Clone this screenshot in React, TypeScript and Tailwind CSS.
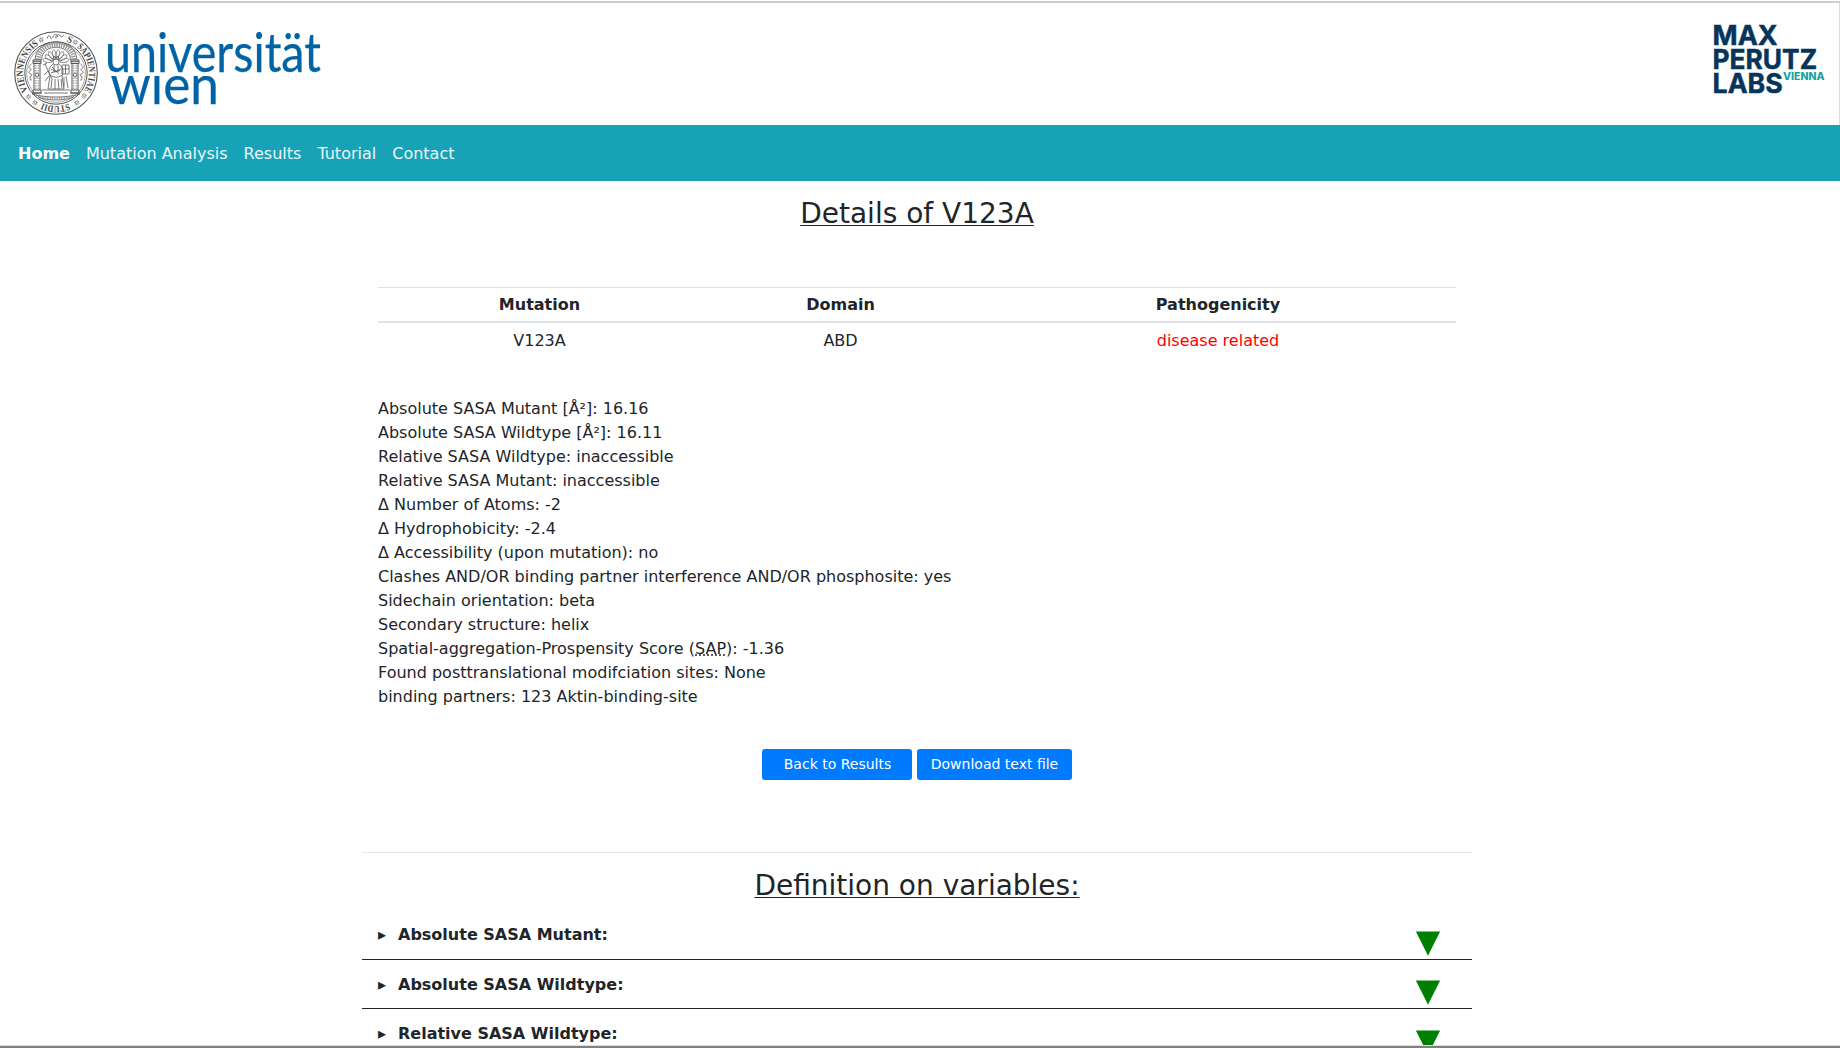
import React from "react";

const links = ["Mutation Analysis", "Results", "Tutorial", "Contact"];

const details: React.ReactNode[] = [
  "Absolute SASA Mutant [Å²]: 16.16",
  "Absolute SASA Wildtype [Å²]: 16.11",
  "Relative SASA Wildtype: inaccessible",
  "Relative SASA Mutant: inaccessible",
  "Δ Number of Atoms: -2",
  "Δ Hydrophobicity: -2.4",
  "Δ Accessibility (upon mutation): no",
  "Clashes AND/OR binding partner interference AND/OR phosphosite: yes",
  "Sidechain orientation: beta",
  "Secondary structure: helix",
  <>
    Spatial-aggregation-Prospensity Score (<abbr className="underline decoration-dotted">SAP</abbr>): -1.36
  </>,
  "Found posttranslational modifciation sites: None",
  "binding partners: 123 Aktin-binding-site",
];

const definitions = [
  { label: "Absolute SASA Mutant:", text: "mt-3", arrow: "mt-5" },
  { label: "Absolute SASA Wildtype:", text: "mt-[13px]", arrow: "mt-5" },
  { label: "Relative SASA Wildtype:", text: "mt-[13px]", arrow: "mt-[21px]" },
];

const RING = 2 * Math.PI * 33;
const at = (deg: number) => (deg / 360) * RING;

function Seal() {
  const words: [string, number, number][] = [
    ["S", 18, 9],
    ["SAPIENTIAE", 39, 83],
    ["STUDII", 157, 47],
    ["VIENNENSIS", 237, 91],
  ];
  const stars = [32, 129, 145, 215, 229, 336];
  const rays = [-75, -54, -33, -11, 11, 33, 54, 75];
  return (
    <g transform="translate(56 73)" fill="none" stroke="#555" strokeWidth="0.8">
      <circle r="41.3" strokeWidth="1.1" />
      <circle r="31.2" strokeWidth="1" />
      <circle r="29.4" strokeWidth="0.5" />
      <path id="ring" d="M0-33A33 33 0 0 1 0 33A33 33 0 0 1 0-33" stroke="none" />
      {words.map(([w, a, span]) => (
        <text
          key={w}
          fill="#444"
          stroke="none"
          className="font-bold"
          fontFamily="Liberation Serif, serif"
          fontSize="9.6"
        >
          <textPath href="#ring" startOffset={at(a)} textLength={at(span)} lengthAdjust="spacingAndGlyphs">
            {w}
          </textPath>
        </text>
      ))}
      {stars.map((a) => (
        <g key={a} transform={`rotate(${a}) translate(0 -36.3)`} strokeWidth="0.6">
          <path d="M-2.600 0H-.8M.8 0H2.600M0-2.600V-.8M0 .8V2.600M-1.900-1.900L-.6-.6M.6 .6L1.900 1.900M1.900-1.900L.6-.6M-.6 .6L-1.900 1.900" />
        </g>
      ))}
      <path d="M-8.500-34.500c-1-3 3-3.500 3-1.200s2 1.500 2.500-.5s4-3.200 4.500-1s-3 2.500-2 1s4-3 4.500-1s4 .8 3.500-1" />
      {/* arch */}
      <path d="M-21-13C-20-37 20-37 21-13M-14.500-13C-14-30 14-30 14.500-13" />
      <path
        d="M-17.800-13C-17-33.500 17-33.500 17.800-13"
        strokeWidth="4.800"
        strokeDasharray="1.400 1"
        stroke="#999"
      />
      {rays.map((a) => (
        <path
          key={a}
          transform={`translate(0 -10) rotate(${a})`}
          d="M0-4C-2.500-8-2.500-12 0-13.500C2.500-12 2.500-8 0-4"
          strokeWidth="0.600"
        />
      ))}
      {/* columns */}
      {[-19, 19].map((x) => (
        <g key={x} transform={`translate(${x} 0)`}>
          <path d="M-4-13H4V-9.500H-4ZM-4-11.300H4M-3-9.500V17M3-9.500V17M-4 17H4V20H-4ZM-5 20H5" strokeWidth="1" />
          <path d="M-1.200-8V16M1.200-8V16" strokeWidth="0.700" strokeDasharray="1.500 1" />
          <path d="M-2 2L0-.5L2 2L0 4.500Z" />
        </g>
      ))}
      <path d="M-24.500-9c-3 2-3.500 4-1 5s-3 2-1.500 4s4 0 2 3s-1 4 1 4M24.500-9c3 2 3.500 4 1 5s3 2 1.500 4s-4 0-2 3s1 4-1 4" />
      {/* seated figure */}
      <circle cx="0" cy="-11" r="3" />
      <path d="M-3-14L-2-17L0-15L2-17L3-14M-3-9C-7-6-8-1-6 3L-8 16H8L6 3C8-1 7-6 3-9M-2-8V-1M2-8V-1M-6 2C-2 5 2 5 6 2M-4 6L-5 15M-1 6V16M2 6L3 16M5 6L6 15M-5-4L0-1L5-4M-5 0L4-3M-4-6L3 1" />
      <path d="M-11-9L-4 6M-13-8L-9-10M6-8H13V1H6ZM9.500-8V1M6-4H13M-12 2L-8-2M-11 8L-7 3M10 3L12 15M8 4V14" />
      <path d="M-14 17H14M-12 20H12M-24 21C-12 25 12 25 24 21M-18 24C-9 28 9 28 18 24" />
      <path
        d="M-17 22.500C-9 26.500 9 26.500 17 22.500"
        strokeWidth="2.200"
        strokeDasharray="0.800 0.900"
        stroke="#888"
      />
    </g>
  );
}

function UniversityLogo() {
  return (
    <svg width="340" height="122" viewBox="0 0 340 122" className="block overflow-visible">
      <Seal />
      <clipPath id="below-first-line">
        <rect x="100" y="75.500" width="140" height="40" />
      </clipPath>
      <g fill="#0063a6" stroke="#0063a6" strokeWidth="0.250" fontFamily="Lato, sans-serif">
        <text x="105" y="71.800" fontSize="54" textLength="216" lengthAdjust="spacingAndGlyphs">
          universität
        </text>
        <text
          x="110.500"
          y="104.300"
          fontSize="53.500"
          textLength="108.500"
          lengthAdjust="spacingAndGlyphs"
          clipPath="url(#below-first-line)"
        >
          wien
        </text>
      </g>
    </svg>
  );
}

function LabsLogo() {
  return (
    <svg width="140" height="122" viewBox="1700 0 140 122" className="block">
      <g
        fill="#06355b"
        stroke="#06355b"
        strokeWidth="0.5"
        fontFamily="Inter, sans-serif"
        fontSize="27.3"
        fontWeight="700"
      >
        <text x="1712.600" y="45" textLength="65" lengthAdjust="spacingAndGlyphs">
          MAX
        </text>
        <text x="1712.600" y="68.900" textLength="104.500" lengthAdjust="spacingAndGlyphs">
          PERUTZ
        </text>
        <text x="1712.600" y="92.600" textLength="70" lengthAdjust="spacingAndGlyphs">
          LABS
        </text>
      </g>
      <text
        x="1783"
        y="80"
        fill="#12a3a3"
        fontFamily="Inter, sans-serif"
        fontSize="9.800"
        fontWeight="800"
        textLength="41.500"
        lengthAdjust="spacingAndGlyphs"
      >
        VIENNA
      </text>
    </svg>
  );
}

export default function App() {
  return (
    <div className="flex h-[1048px] flex-col overflow-hidden bg-white font-['DejaVu_Sans',sans-serif] text-base leading-6 text-[#212529]">
      <div className="mt-px h-0.5 shrink-0 bg-[#cccecd]" />
      <header className="flex h-[122px] shrink-0 justify-between border-r border-[#dcdcdc]">
        <div className="-mt-[3px] h-[122px]">
          <UniversityLogo />
        </div>
        <div className="-mt-[3px] -mr-px h-[122px]">
          <LabsLogo />
        </div>
      </header>
      <nav className="flex h-14 shrink-0 items-center gap-4 bg-[#17a2b8] px-[18px] pt-0.5 text-white/90">
        <a className="font-bold text-white">Home</a>
        {links.map((l) => (
          <a key={l}>{l}</a>
        ))}
      </nav>
      <main className="mr-[368px] ml-[362px] flex min-h-0 flex-1 flex-col overflow-hidden">
        <h3 className="mt-4 text-center text-[28px] leading-[34px] underline decoration-1 underline-offset-2">
          Details of V123A
        </h3>
        <table className="mx-4 mt-14 w-[1078px] shrink-0 table-fixed border-separate border-spacing-0 text-center">
          <colgroup>
            <col className="w-[323px]" />
            <col className="w-[279px]" />
            <col />
          </colgroup>
          <thead>
            <tr className="h-9">
              <th className="border-t border-b-2 border-[#dee2e6]">Mutation</th>
              <th className="border-t border-b-2 border-[#dee2e6]">Domain</th>
              <th className="border-t border-b-2 border-[#dee2e6]">Pathogenicity</th>
            </tr>
          </thead>
          <tbody>
            <tr className="h-9">
              <td>V123A</td>
              <td>ABD</td>
              <td className="text-[#ff0000]">disease related</td>
            </tr>
          </tbody>
        </table>
        <div className="mt-[38px] px-4">
          {details.map((d, i) => (
            <p key={i}>{d}</p>
          ))}
        </div>
        <div className="mt-10 flex justify-center gap-[5px] text-sm leading-[21px] text-white">
          <button className="h-[31px] w-[150px] rounded-[3px] bg-[#007bff] pl-px">Back to Results</button>
          <button className="h-[31px] w-[155px] rounded-[3px] bg-[#007bff]">Download text file</button>
        </div>
        <hr className="mt-[72px] border-t border-[#e5e5e5]" />
        <h3 className="mt-4 mb-2 text-center text-[28px] leading-[34px] underline decoration-1 underline-offset-2">
          Definition on variables:
        </h3>
        {definitions.map((d) => (
          <div
            key={d.label}
            className="flex h-[49px] shrink-0 items-start border-b border-[#212529] pr-8 pl-4 font-bold"
          >
            <span className={`${d.text} w-5`}>▸</span>
            <span className={`${d.text} flex-1`}>{d.label}</span>
            <svg width="24" height="25" viewBox="0 0 24 25" className={d.arrow} fill="#008000">
              <path d="M-.2 .4H24.200L12 24.700Z" />
            </svg>
          </div>
        ))}
      </main>
      <div className="h-[3px] shrink-0 border-t border-[#dcdcdc] bg-[#808080]" />
    </div>
  );
}
